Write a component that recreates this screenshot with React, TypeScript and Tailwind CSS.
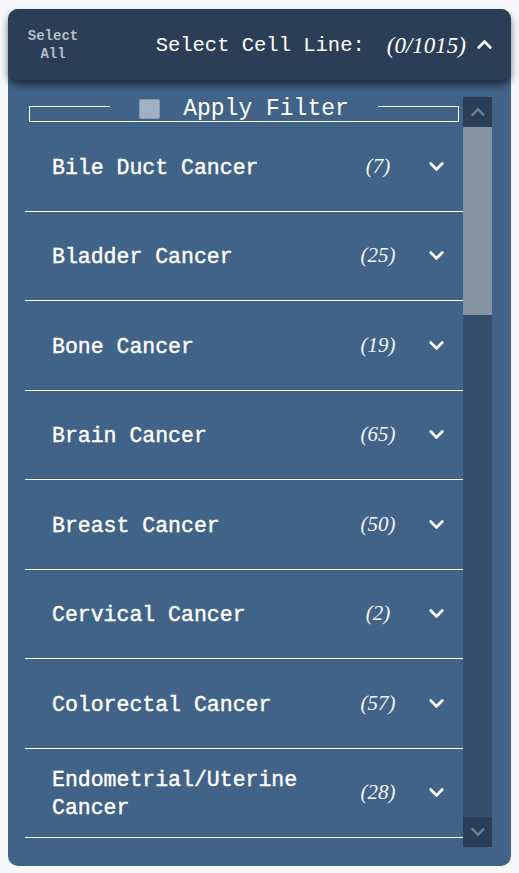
import { FaChevronDown, FaChevronUp } from 'react-icons/fa'

const cancers = [
  { name: 'Bile Duct Cancer', count: 7 },
  { name: 'Bladder Cancer', count: 25 },
  { name: 'Bone Cancer', count: 19 },
  { name: 'Brain Cancer', count: 65 },
  { name: 'Breast Cancer', count: 50 },
  { name: 'Cervical Cancer', count: 2 },
  { name: 'Colorectal Cancer', count: 57 },
  { name: 'Endometrial/Uterine Cancer', count: 28 },
]

function CancerRow({ name, count }: { name: string; count: number }) {
  return (
    <li className="h-[89.5px] shrink-0 flex items-center border-b border-white pl-[27px] pr-[17px]">
      <p className="flex-1 pt-[3px] text-[21.5px] leading-[28px] text-white [-webkit-text-stroke:0.4px_white]">{name}</p>
      <span className="w-[50px] text-center font-['Liberation_Serif',serif] italic text-[21px] text-gray-100">
        ({count})
      </span>
      <span className="ml-[23px] w-[20px] flex justify-center text-white text-[17px]">
        <FaChevronDown />
      </span>
    </li>
  )
}

export default function App() {
  return (
    <div className="min-h-screen bg-[#f5f7f9] p-[8px] pt-[9px] font-['Liberation_Mono',monospace]">
      <div className="w-[503px] h-[857px] bg-[#426388] rounded-[10px] flex flex-col">
        {/* Header */}
        <header className="relative z-10 h-[71px] shrink-0 bg-[#2c3e55] rounded-[10px] shadow-[0_5px_7px_rgba(0,0,0,0.55)] flex items-center pl-[18px] pr-[18px]">
          <div className="w-[54px] text-center text-[14px] leading-[18px] font-bold text-[#b3bcc6]">
            Select
            <br />
            All
          </div>
          <div className="ml-auto mt-[3px] flex items-center">
            <span className="text-[20.5px] text-white">Select Cell Line:</span>
            <span className="ml-[22px] font-['Liberation_Serif',serif] italic text-[23px] text-white">(0/1015)</span>
            <span className="ml-[10px] -mt-[3px] text-white text-[17px]">
              <FaChevronUp />
            </span>
          </div>
        </header>

        {/* Body */}
        <div className="flex flex-1 min-h-0 pl-[17px] pr-[19px] pt-[17px] pb-[19px]">
          <div className="flex-1 flex flex-col overflow-hidden">
            {/* Apply filter fieldset */}
            <div className="shrink-0 mx-[4px] h-[25px] flex">
              <div className="w-[81px] flex flex-col">
                <div className="h-[9px]" />
                <div className="flex-1 border-l border-t border-b border-white" />
              </div>
              <div className="flex-1 flex flex-col border-b border-white">
                <div className="flex-1 flex items-center justify-center gap-[23px]">
                  <span className="w-[21px] h-[20px] bg-[#a1b1c5] border border-[#8a97a8] rounded-[2px]" />
                  <span className="text-[23px] leading-[20px] text-white">Apply Filter</span>
                </div>
              </div>
              <div className="w-[81px] flex flex-col">
                <div className="h-[9px]" />
                <div className="flex-1 border-r border-t border-b border-white" />
              </div>
            </div>
            <ul className="flex flex-col">
              {cancers.map((c) => (
                <CancerRow key={c.name} name={c.name} count={c.count} />
              ))}
            </ul>
          </div>

          {/* Scrollbar */}
          <div className="w-[29px] shrink-0 flex flex-col bg-[#354e6c]">
            <div className="h-[30px] bg-[#2c3e55] flex items-center justify-center text-[#6b7f94] text-[16px]">
              <FaChevronUp />
            </div>
            <div className="h-[188px] bg-[#8593a2]" />
            <div className="flex-1" />
            <div className="h-[30px] bg-[#2c3e55] flex items-center justify-center text-[#6b7f94] text-[16px]">
              <FaChevronDown />
            </div>
          </div>
        </div>
      </div>
    </div>
  )
}
